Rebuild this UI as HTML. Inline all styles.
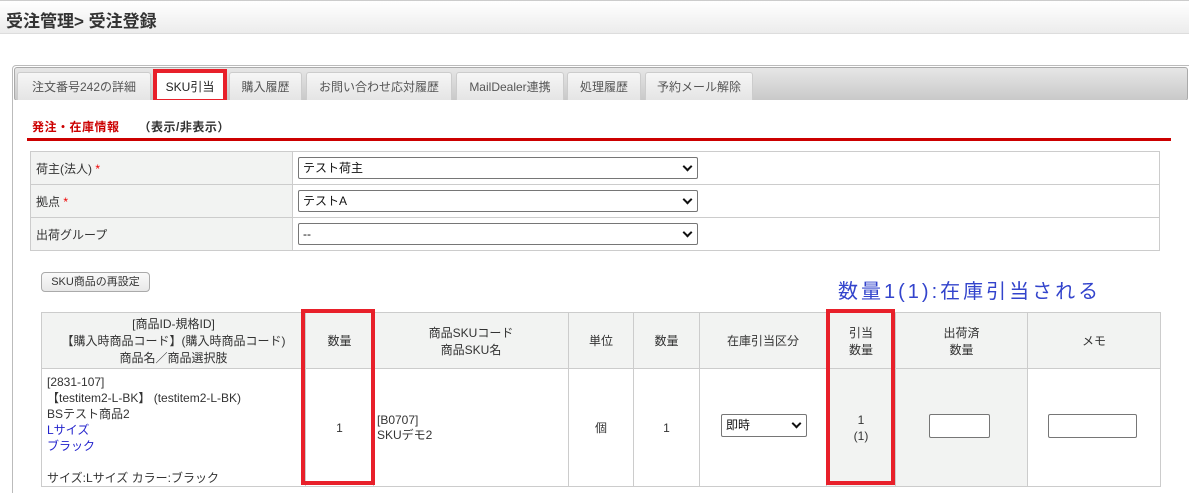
<!DOCTYPE html>
<html style="height:493px;overflow:hidden"><head><meta charset="utf-8"><style>
*{box-sizing:border-box;margin:0;padding:0}
body{width:1189px;height:493px;background:#fff;font-family:"Liberation Sans","Noto Sans CJK JP",sans-serif;font-size:12px;color:#333;position:relative;overflow:hidden}
.a{position:absolute}
.hdr{left:0;top:0;width:1189px;height:34px;background:linear-gradient(#fff,#ececec);border-top:1px solid #ccc;border-bottom:1px solid #ddd}
.hdr span{position:absolute;left:6px;top:6px;font-size:17px;font-weight:bold;color:#333}
.box{left:12px;top:65px;width:1190px;height:430px;border:1px solid #bbb;border-radius:4px}
.bar{left:14px;top:67px;width:1174px;height:34px;background:linear-gradient(#e6e6e6,#c9c9c9);border:1px solid #aaa;border-radius:3px}
.tab{top:72px;height:29px;background:linear-gradient(#f6f6f6,#e4e4e4);border:1px solid #ccc;border-bottom:none;border-radius:3px 3px 0 0;text-align:center;line-height:28px;color:#555;font-size:12px}
.tab.on{background:#fff;color:#222}
.sel{height:22px;border:1px solid #767676;border-radius:2px;background:#fff;font-size:12px;line-height:20px;padding-left:4px;color:#111}
.sel:after{content:"";position:absolute;right:6px;top:5px;width:5px;height:5px;border-right:2px solid #111;border-bottom:2px solid #111;transform:rotate(45deg)}
table{border-collapse:collapse}
td,th{border:1px solid #ccc;font-weight:normal}
.red{border:4px solid #e8202a}
</style></head><body>
<div class="a hdr"><span>受注管理&gt; 受注登録</span></div>
<div class="a box"></div>
<div class="a bar"></div>
<div class="a tab" style="left:17px;width:134px">注文番号242の詳細</div>
<div class="a tab on" style="left:155px;width:70px">SKU引当</div>
<div class="a tab" style="left:229px;width:73px">購入履歴</div>
<div class="a tab" style="left:306px;width:146px">お問い合わせ応対履歴</div>
<div class="a tab" style="left:456px;width:108px">MailDealer連携</div>
<div class="a tab" style="left:567px;width:74px">処理履歴</div>
<div class="a tab" style="left:645px;width:108px">予約メール解除</div>
<div class="a red" style="left:153px;top:69px;width:74px;height:34px"></div>
<div class="a" style="left:12px;top:100px;width:1177px;height:393px;background:#fff;border-left:1px solid #bbb"></div>
<div class="a" style="left:32px;top:118px;font-weight:bold;color:#c00;font-size:12px;letter-spacing:0.5px">発注・在庫情報　　<span style="color:#333">（表示/非表示）</span></div>
<div class="a" style="left:27px;top:138px;width:1144px;height:3px;background:#c00"></div>
<table class="a" style="left:30px;top:151px;width:1130px">
<tr style="height:33px"><td style="width:262px;background:#f2f3f2;padding-left:5px;vertical-align:top;padding-top:8px">荷主(法人) <span style="color:#e00">*</span></td><td></td></tr>
<tr style="height:33px"><td style="background:#f2f3f2;padding-left:5px;vertical-align:top;padding-top:8px">拠点 <span style="color:#e00">*</span></td><td></td></tr>
<tr style="height:33px"><td style="background:#f2f3f2;padding-left:5px;vertical-align:top;padding-top:8px">出荷グループ</td><td></td></tr>
</table>
<div class="a sel" style="left:298px;top:157px;width:400px">テスト荷主</div>
<div class="a sel" style="left:298px;top:190px;width:400px">テストA</div>
<div class="a sel" style="left:298px;top:223px;width:400px">--</div>
<div class="a" style="left:41px;top:272px;width:109px;height:20px;border:1px solid #aaa;border-radius:4px;background:linear-gradient(#fafafa,#e8e8e8);font-size:11px;text-align:center;line-height:18px">SKU商品の再設定</div>
<div class="a" style="left:838px;top:275px;font-size:20px;color:#3344cc;letter-spacing:3px">数量1(1):在庫引当される</div>
<table class="a" style="left:41px;top:312px;width:1120px;text-align:center">
<tr style="height:56px;background:#f2f3f2">
<th style="width:264px">[商品ID-規格ID]<br>【購入時商品コード】(購入時商品コード)<br>商品名／商品選択肢</th>
<th style="width:68px">数量</th>
<th style="width:195px">商品SKUコード<br>商品SKU名</th>
<th style="width:65px">単位</th>
<th style="width:66px">数量</th>
<th style="width:127px">在庫引当区分</th>
<th style="width:69px">引当<br>数量</th>
<th style="width:132px">出荷済<br>数量</th>
<th>メモ</th></tr>
<tr style="height:116px">
<td style="text-align:left;padding-left:5px;line-height:16px;vertical-align:top;padding-top:5px">[2831-107]<br>【testitem2-L-BK】 (testitem2-L-BK)<br>BSテスト商品2<br><span style="color:#22c">Lサイズ<br>ブラック</span><br><br>サイズ:Lサイズ カラー:ブラック</td>
<td>1</td>
<td style="text-align:left;padding-left:3px;line-height:15px">[B0707]<br>SKUデモ2</td>
<td>個</td><td>1</td><td></td>
<td style="background:#f2f3f2;line-height:16px">1<br>(1)</td>
<td style="background:#f2f3f2"></td><td></td></tr>
</table>
<div class="a sel" style="left:721px;top:414px;width:86px;height:23px">即時</div>
<div class="a" style="left:929px;top:414px;width:61px;height:24px;border:1px solid #767676;border-radius:2px;background:#fff"></div>
<div class="a" style="left:1048px;top:414px;width:89px;height:24px;border:1px solid #767676;border-radius:2px;background:#fff"></div>
<div class="a red" style="left:301px;top:309px;width:74px;height:176px"></div>
<div class="a red" style="left:826px;top:309px;width:69px;height:176px"></div>
</body></html>
